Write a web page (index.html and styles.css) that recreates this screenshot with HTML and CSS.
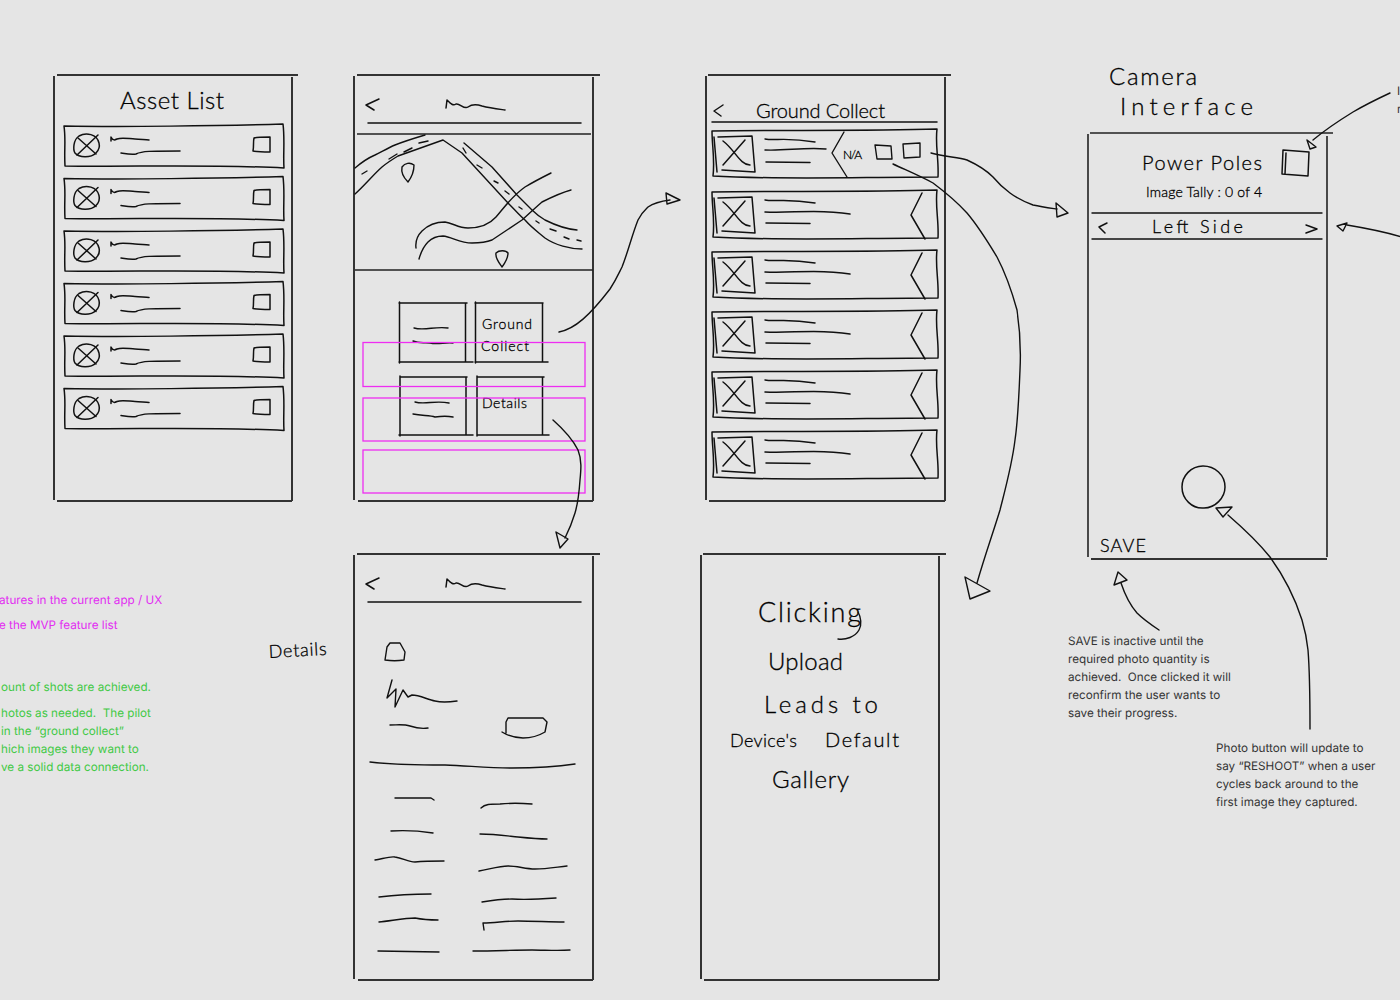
FILE: index.html
```html
<!DOCTYPE html>
<html lang="en">
  <head>
    <meta charset="UTF-8" />
    <meta name="viewport" content="width=device-width, initial-scale=1.0" />
    <title>Wireframe sketches</title>
    <link rel="stylesheet" href="styles.css">
  </head>
  <body>
    <div class="canvas">
      <svg class="sketch" width="1400" height="1000" viewBox="0 0 1400 1000" fill="none">
        <defs>
          <g id="header">
            <path d="M379 99L366 105L374 110" />
            <path d="M446 108L447 100C451 104 453 106 456 104C460 103 464 110 468 107C472 104 476 104 482 106C490 108 498 109 505 110" />
            <path d="M368 123H581" />
          </g>
          <g id="asset-row">
            <path d="M64 126C120 127 220 126 283 124C285 140 283 155 284 168C210 164 130 167 65 166C64 150 66 140 64 126Z" />
            <path d="M99 143C97 134 86 132 79 136C73 140 73 150 75 153C79 158 91 158 96 153C99 150 100 147 99 143" />
            <path d="M78 138L96 154M77 155L98 135" />
            <path d="M111 141V137C113 141 115 140 117 139C122 137 130 139 135 139C140 139 145 140 149 140" />
            <path d="M121 153C127 154 132 155 136 154C142 151 150 151 180 151" />
            <path d="M254 138C258 137 265 137 270 137L270 152C265 152 258 152 253 151C254 146 253 142 254 138Z" />
          </g>
          <g id="collect-base">
            <path d="M712 131C780 130 870 131 937 129C935 145 939 160 938 177C860 177 780 180 713 176C715 160 712 145 712 131Z" />
            <path d="M718 137L752 136L755 172L722 170M714 137L717 172" />
            <path d="M723 141C735 150 740 165 750 165M723 165L745 140" />
            <path d="M766 162L810 162.500" />
          </g>
          <g id="collect-row">
            <use href="#collect-base" />
            <path d="M765 139C775 141 785 137 815 142" />
            <path d="M765 151C790 153 815 147 850 153" />
            <path d="M922 132L911 154L925 178" />
          </g>
        </defs>

        <!-- phone frames -->
        <path class="frame-line" d="M57 75H298M54 76V500M292 77V501M57 501H292" />
        <path class="frame-line" d="M357 75H600M354 76V500M593 77V501M358 501H593" />
        <path class="frame-line" d="M708 75H951M706 76V500M945 77V501M709 501H945" />
        <path class="frame-line" d="M357 554H600M354 555V979M593 556V980M358 980H593" />
        <path class="frame-line" d="M703 554H946M701 555V979M939 556V980M704 980H939" />
        <path class="frame-thin" d="M1090 133H1333M1088 134V557M1327 136V557" />
        <path class="frame-line" d="M1091 559H1327" />

        <!-- asset list -->
        <use href="#asset-row" />
        <use href="#asset-row" y="52.500" />
        <use href="#asset-row" y="105" />
        <use href="#asset-row" y="157.500" />
        <use href="#asset-row" y="210" />
        <use href="#asset-row" y="262.500" />
        <text class="hand hand-lg" x="120" y="109" textLength="104">Asset List</text>

        <!-- map screen -->
        <use href="#header" />
        <path class="frame-thin" d="M357 134H591M355 270H593" />
        <g class="ink-thin">
          <path d="M355 168C362 162 368 158 375 155C383 151 388 148 395 145C405 141 415 138 425 135" />
          <path d="M355 194C365 185 373 175 382 167C388 162 393 159 398 156L443 140L462 153L508 203C515 210 520 216 525 220C532 228 538 232 545 238C555 245 570 249 582 249" />
          <path d="M464 143L492 167L517 195L532 210C536 214 540 217 545 220C555 225 565 229 577 230" />
          <path d="M362 174L367 171M389 159L397 154M404 152L412 148M419 143L428 141M463 148L466 153M477 165L482 168M494 181L498 183M505 191L509 194M519 207L522 209M536 221L539 223M550 229L556 231M564 237L569 239M577 240L581 241" />
          <path d="M416 248C415 240 418 235 422 231C428 225 435 222 445 222C453 223 458 228 468 228C478 228 488 226 496 217C503 209 512 196 525 187C535 181 543 177 551 173" />
          <path d="M419 259C421 252 424 246 428 242C433 237 438 236 443 236C452 237 460 243 472 243C482 243 487 242 492 240L522 220C530 213 535 208 542 202C552 197 560 193 571 190" />
          <path d="M402 167C401 172 404 178 408 182C411 178 414 172 414 165C410 162 405 163 402 167Z" />
          <path d="M496 253C495 258 499 263 502 267C505 263 508 258 508 253C506 250 499 250 496 253Z" />
        </g>

        <!-- map screen tiles -->
        <path class="ink" d="M399 303H467M399.500 302V363M465.500 303V362M399 362H473M475 303H543M475.500 302V363M542.500 303V362M475 362H548M400 377H467M400 376V436M466 377V435M399 435H473M477 377H544M477 376V436M542.500 377V435M477 435H549" />
        <path class="ink-thin" d="M414 328C425 331 435 326 448 328M413 341C420 344 425 342 430 343C438 345 445 342 453 343M415 402C425 405 435 400 449 403M413 414C422 416 430 415 435 417C442 416 448 416 453 417" />
        <text class="hand hand-xs" x="482" y="329" textLength="50">Ground</text>
        <text class="hand hand-xs" x="481" y="351" textLength="48">Collect</text>
        <text class="hand hand-xs" x="482" y="408" textLength="45">Details</text>
        <rect class="highlight" x="363" y="342.500" width="222" height="44" />
        <rect class="highlight" x="363" y="398" width="222" height="43" />
        <rect class="highlight" x="363" y="450" width="222" height="43" />

        <!-- ground collect screen -->
        <path class="ink" d="M723 105L714 111L721 116" />
        <path class="ink" d="M712 122H937" />
        <text class="hand hand-sm" x="756" y="118" textLength="129">Ground Collect</text>
        <use href="#collect-base" />
        <path class="ink-thin" d="M765 139C775 141 785 137 815 142M765 150C785 151 805 147 826 149" />
        <path class="ink-thin" d="M844 132L832 153L847 177" />
        <path class="ink-thin" d="M875 145L891 146L892 159L877 159ZM903 144L920 143V157L904 158Z" />
        <text class="hand hand-xxs" x="843" y="159" textLength="19">N/A</text>
        <use href="#collect-row" y="61" />
        <use href="#collect-row" y="121" />
        <use href="#collect-row" y="181" />
        <use href="#collect-row" y="241" />
        <use href="#collect-row" y="301" />

        <!-- camera screen -->
        <text class="hand hand-lg" x="1109" y="85" textLength="88">Camera</text>
        <text class="hand hand-lg" x="1120" y="115" textLength="133">Interface</text>
        <text class="hand hand-sm" x="1142" y="170" textLength="120">Power Poles</text>
        <text class="hand hand-xs" x="1146" y="197" textLength="116">Image Tally : 0 of 4</text>
        <text class="hand hand-md" x="1152" y="233" textLength="91">Left Side</text>
        <text class="hand hand-md" x="1100" y="552" textLength="46">SAVE</text>
        <path class="ink" d="M1283 150L1309 152L1308 176L1282 174ZM1286 153L1285 174" />
        <path class="ink-thin" d="M1092 213H1322M1092 239H1322" />
        <path class="ink" d="M1107 223L1099 227L1105 233M1306 225L1317 229L1306 233" />
        <path class="ink" d="M1203 466C1191 466 1182 476 1182 487C1182 499 1192 509 1204 508C1215 508 1225 498 1225 487C1225 475 1215 466 1203 466" />

        <!-- details screen -->
        <use href="#header" y="479" />
        <g class="ink-thin">
          <path d="M385 660L387 647L390 643H400L405 652L404 660C398 661 391 661 385 660Z" />
          <path d="M392 680L387 698L396 689L395 707L403 690L408 697L412 695C420 695 428 700 435 701C443 703 450 702 457 701" />
          <path d="M390 725C398 725 404 724 410 726C416 728 422 729 428 728" />
          <path d="M502 732C510 737 517 738 523 738C532 738 540 735 545 732L547 722L543 718H508L506 722V733" />
          <path d="M370 762C395 765 420 765 445 765C470 766 490 768 512 768C535 768 555 767 575 764" />
          <path d="M395 798H431L434 800M391 831C405 830 420 831 433 833M375 860C382 859 390 856 395 857C403 858 408 862 415 862C425 861 435 861 444 861M379 897C395 895 412 894 431 894M379 922C390 921 405 918 415 918C420 919 425 920 438 920M378 951L439 952" />
          <path d="M481 808C485 804 490 804 500 804C510 803 520 803 532 804M480 834C495 834 508 836 518 837C528 838 538 839 547 839M479 871C490 869 500 866 508 866C518 866 525 869 535 869C547 869 557 867 567 866M482 902C495 900 505 899 512 899C528 900 542 899 556 898M484 930L483 923C495 923 505 921 518 921C533 921 550 922 564 922M473 951C495 951 515 950 532 950C545 950 558 951 570 950" />
        </g>
        <text class="hand hand-md tilt" x="269" y="658" textLength="58">Details</text>

        <!-- gallery screen -->
        <text class="hand hand-xl" x="758" y="622" textLength="103">Clicking</text>
        <path class="ink-thin" d="M838 639C846 640 855 637 859 630C862 625 861 617 858 612" />
        <text class="hand hand-lg" x="768" y="670" textLength="75">Upload</text>
        <text class="hand hand-lg" x="764" y="713" textLength="114">Leads to</text>
        <text class="hand hand-md" x="730" y="747" textLength="67">Device's</text>
        <text class="hand hand-sm" x="825" y="747" textLength="74">Default</text>
        <text class="hand hand-lg" x="772" y="788" textLength="77">Gallery</text>

        <!-- arrows -->
        <g class="ink-thin">
          <path d="M559 332C575 329 590 315 610 289C616 280 618 275 622 267C628 252 632 235 638 220C642 212 646 209 648 207C655 202 662 201 670 200" />
          <path d="M666 193L680 200L667 204Z" />
          <path d="M553 420C562 428 572 438 578 450C582 460 581 470 580 480C579 495 578 503 575 513C572 523 569 530 565 538" />
          <path d="M556 532L568 539L560 548Z" />
          <path d="M931 153C945 157 958 157 967 160C978 165 986 170 993 177C998 183 1003 188 1010 193C1018 199 1025 202 1033 205C1042 207 1050 208 1057 209" />
          <path d="M1056 203L1068 213L1057 217Z" />
          <path d="M893 164C908 171 920 176 933 183C945 192 957 202 967 213C978 226 988 242 997 257C1006 274 1012 292 1017 310C1020 330 1021 350 1020 370C1019 395 1018 420 1015 440C1012 465 1005 490 1000 510C994 530 985 555 977 583" />
          <path d="M965 577L990 591L970 599Z" />
          <path d="M1390 93C1375 100 1365 105 1353 112C1340 120 1325 130 1313 140" />
          <path d="M1307 140L1316 147L1310 149Z" />
          <path d="M1402 237C1385 232 1365 228 1347 225" />
          <path d="M1337 226L1347 223L1343 231Z" />
          <path d="M1310 729C1310 700 1310 675 1308 650C1307 640 1305 630 1302 620C1295 598 1283 575 1270 557C1258 542 1243 528 1228 515" />
          <path d="M1216 508L1232 507L1223 517Z" />
          <path d="M1159 630C1150 624 1143 619 1137 613C1130 605 1125 595 1121 583" />
          <path d="M1118 572L1127 580L1114 585Z" />
        </g>
      </svg>

      <p class="note note-save">SAVE is inactive until the
required photo quantity is
achieved.  Once clicked it will
reconfirm the user wants to
save their progress.</p>
      <p class="note note-photo">Photo button will update to
say “RESHOOT” when a user
cycles back around to the
first image they captured.</p>
      <p class="note note-cut">I
r</p>

      <p class="note note-pink note-first">atures in the current app / UX</p>
      <p class="note note-pink note-second">e the MVP feature list</p>
      <p class="note note-green note-third">ount of shots are achieved.</p>
      <p class="note note-green note-fourth">hotos as needed.  The pilot
in the “ground collect”
hich images they want to
ve a solid data connection.</p>
    </div>
  </body>
</html>
```

FILE: styles.css
```css
body {
  margin: 0;
  background-color: #e5e5e5;
}

.canvas {
  position: relative;
  width: 1400px;
  height: 1000px;
  overflow: hidden;
}

.sketch {
  position: absolute;
  top: 0;
  left: 0;
}

/* Drawn lines */
.frame-line {
  fill: none;
  stroke: #333;
  stroke-width: 2;
}

.frame-thin {
  fill: none;
  stroke: #222;
  stroke-width: 1.6;
}

.ink,
#header,
#asset-row,
#collect-row,
#collect-base {
  fill: none;
  stroke: #111;
  stroke-width: 1.5;
  stroke-linecap: round;
  stroke-linejoin: round;
}

.ink-thin {
  fill: none;
  stroke: #111;
  stroke-width: 1.4;
  stroke-linecap: round;
  stroke-linejoin: round;
}

.highlight {
  fill: none;
  stroke: #ee2df2;
  stroke-width: 1.3;
}

/* Handwritten labels */
.hand {
  font-family: "Lato", sans-serif;
  font-weight: 300;
  fill: #000;
  stroke: #000;
  stroke-width: 0.3;
}

.hand-xxs {
  font-size: 12px;
}

.hand-xs {
  font-size: 14px;
}

.hand-md {
  font-size: 18px;
}

.hand-sm {
  font-size: 20px;
}

.hand-lg {
  font-size: 24px;
}

.hand-xl {
  font-size: 27px;
}

.tilt {
  transform: rotate(-3deg);
  transform-origin: 269px 658px;
}

/* Typed annotations */
.note {
  position: absolute;
  margin: 0;
  font-family: "Inter", sans-serif;
  font-size: 11.7px;
  line-height: 18px;
  text-rendering: geometricPrecision;
  white-space: pre;
  color: #333;
}

.note-save {
  top: 632px;
  left: 1068px;
}

.note-photo {
  top: 739px;
  left: 1216px;
}

.note-cut {
  top: 82px;
  left: 1397px;
}

.note-pink {
  left: -1px;
  color: #e22df2;
}

.note-green {
  left: 1px;
  color: #3fc944;
}

.note-first {
  top: 591px;
}

.note-second {
  top: 616px;
}

.note-third {
  top: 678px;
}

.note-fourth {
  top: 704px;
}
```
